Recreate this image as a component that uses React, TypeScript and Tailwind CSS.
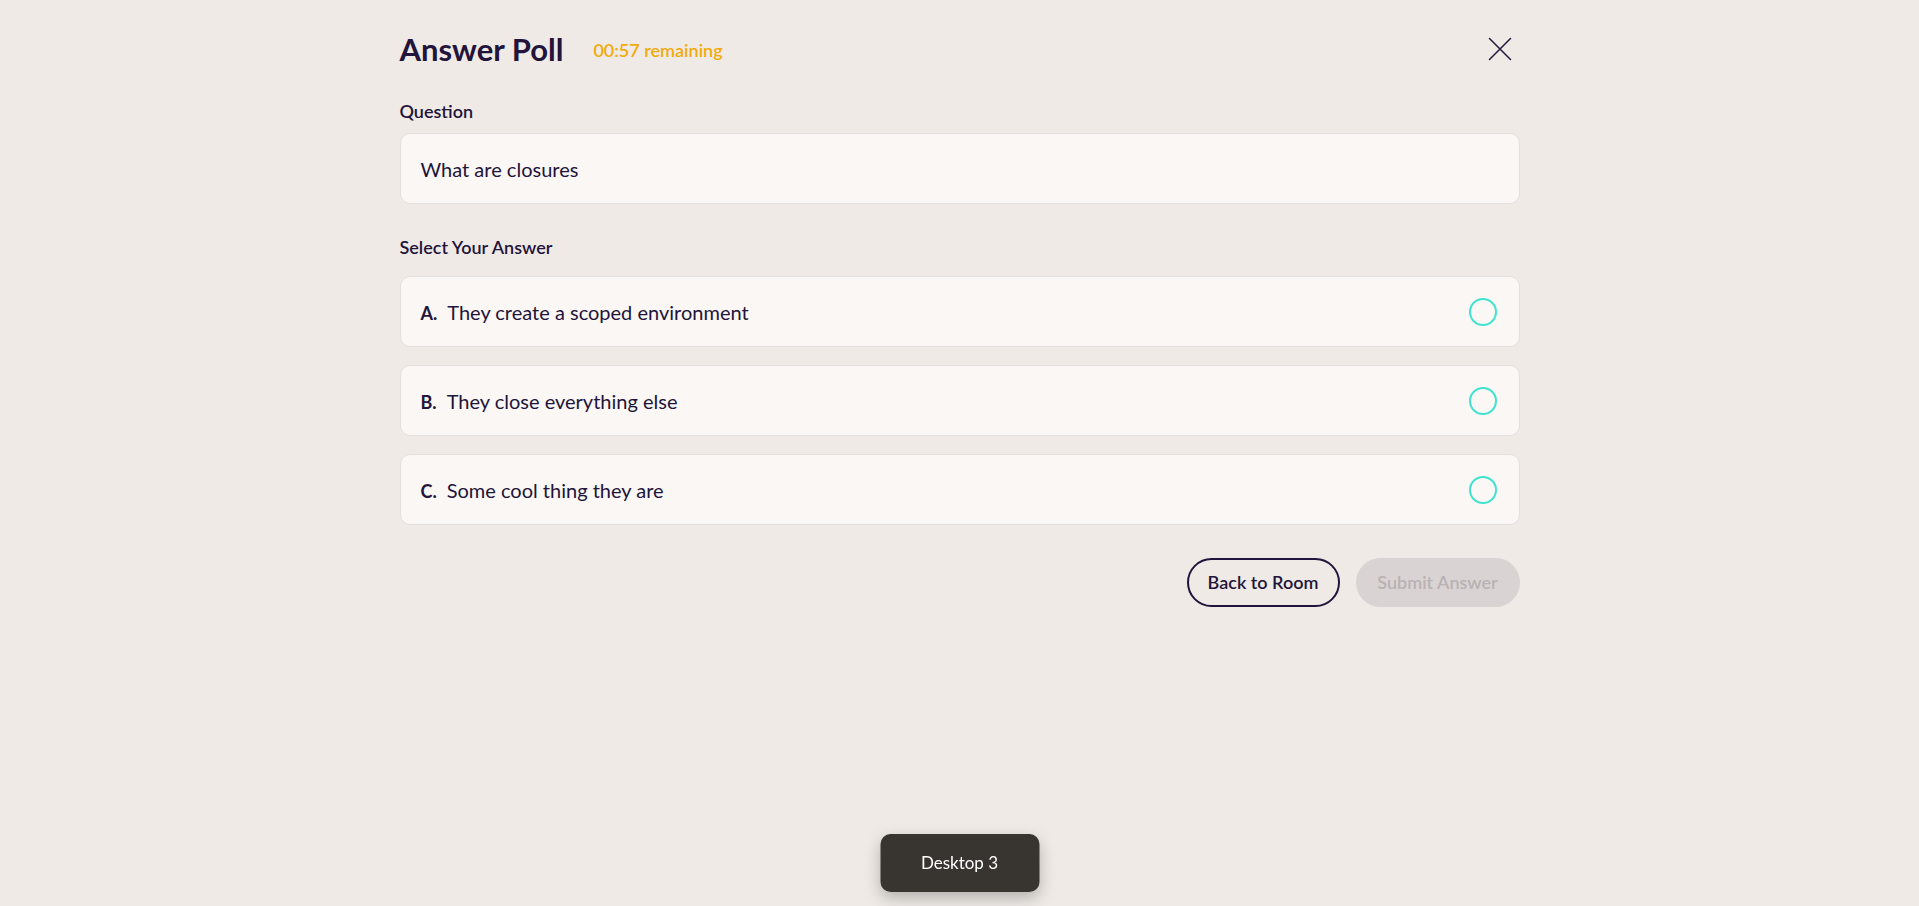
import React from "react";

const options = [
  { key: "A.", text: "They create a scoped environment" },
  { key: "B.", text: "They close everything else" },
  { key: "C.", text: "Some cool thing they are" },
];

export default function App() {
  return (
    <div
      className="min-h-[906px] w-full bg-[#efeae6] text-[#22143a]"
      style={{ fontFamily: "Lato, 'Noto Sans', sans-serif" }}
    >
      <div className="mx-auto w-[1120px] pt-[31px]">
        <div className="flex h-9 items-center justify-between">
          <div className="flex items-center gap-[30px]">
            <h1 className="text-[31px] font-bold leading-9">Answer Poll</h1>
            <span className="pt-[2px] text-[18px] font-semibold text-[#f2aa0c]">00:57 remaining</span>
          </div>
          <button className="mr-[8px] flex h-6 w-6 items-center justify-center text-[#2a1a3e]">
            <svg width="24" height="24" viewBox="0 0 24 24" fill="none" stroke="currentColor" strokeWidth="1.6" strokeLinecap="round">
              <path d="M1.5 1.5L22.5 22.5M22.5 1.5L1.5 22.5" />
            </svg>
          </button>
        </div>

        <div className="mt-[32px] text-[18px] font-semibold leading-6">Question</div>
        <div className="mt-[10px] flex h-[71px] items-center rounded-[10px] border border-[#e4dfdc] bg-[#faf7f5] px-5 text-[20px]">
          What are closures
        </div>

        <div className="mt-[31px] text-[18px] font-semibold leading-6">Select Your Answer</div>
        <div className="mt-[17px] flex flex-col gap-[18px]">
          {options.map((o) => (
            <div
              key={o.key}
              className="flex h-[71px] items-center justify-between rounded-[10px] border border-[#e4dfdc] bg-[#faf7f5] pl-5 pr-[22px]"
            >
              <div className="flex items-baseline gap-[10px] text-[20px]">
                <span className="text-[18px] font-bold">{o.key}</span>
                <span>{o.text}</span>
              </div>
              <span className="h-[28px] w-[28px] rounded-full border-2 border-[#3fe3cf]" />
            </div>
          ))}
        </div>

        <div className="mt-[33px] flex justify-end gap-4">
          <button className="h-[49px] w-[153px] rounded-full border-2 border-[#22143a] text-[18px] font-semibold text-[#22143a]">
            Back to Room
          </button>
          <button className="h-[49px] w-[164px] rounded-full bg-[#d9d4d3] text-[18px] font-semibold text-[#b9b1b4]">
            Submit Answer
          </button>
        </div>
      </div>

      <div className="fixed bottom-[14px] left-1/2 flex h-[58px] w-[159px] -translate-x-1/2 items-center justify-center rounded-[10px] bg-[#38342f] text-[17px] text-white shadow-[0_6px_16px_rgba(0,0,0,0.25)]">
        Desktop 3
      </div>
    </div>
  );
}
